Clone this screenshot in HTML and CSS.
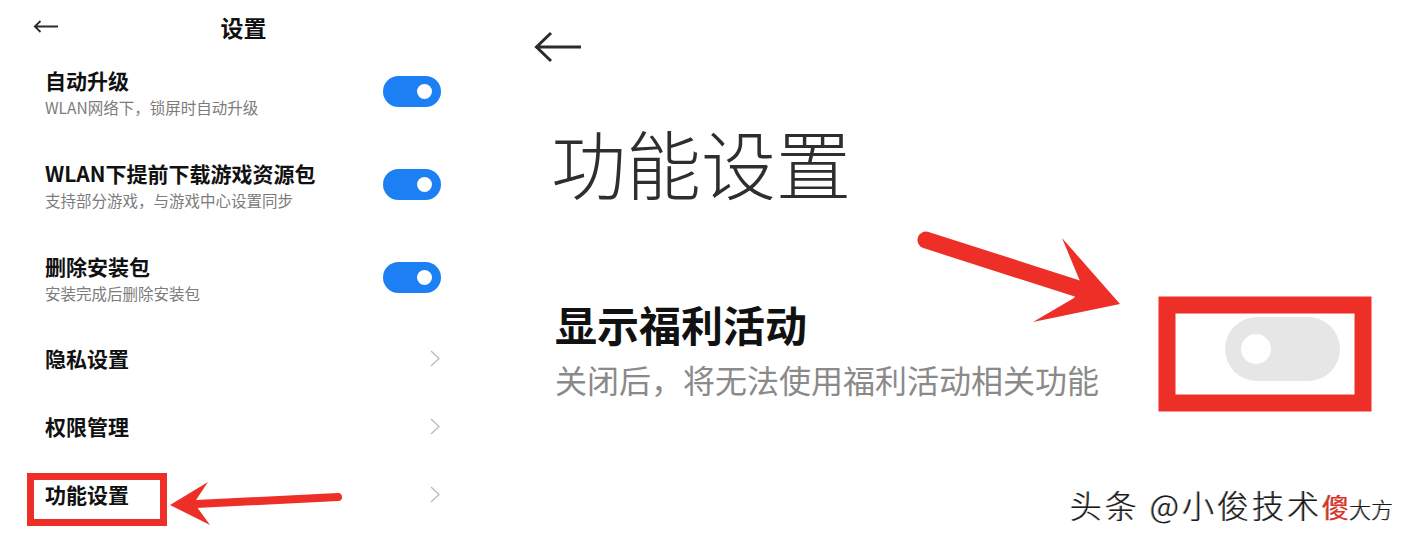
FILE: index.html
```html
<!DOCTYPE html>
<html lang="zh-CN">
<head>
<meta charset="utf-8">
<title>设置</title>
<link rel="stylesheet" href="styles.css">
</head>
<body>
<div class="page">
  <section class="left">
    <header class="l-head">
      <svg class="back-sm" viewBox="0 0 26 13" aria-hidden="true"><path d="M25 6.5H2M7.5 1L1.8 6.5L7.5 12"/></svg>
      <h1 class="l-title">设置</h1>
      <span class="spacer"></span>
    </header>
    <ul class="l-list">
      <li class="row two">
        <div class="txt"><div class="t">自动升级</div><div class="s">WLAN网络下，锁屏时自动升级</div></div>
        <span class="sw on"></span>
      </li>
      <li class="row two">
        <div class="txt"><div class="t">WLAN下提前下载游戏资源包</div><div class="s">支持部分游戏，与游戏中心设置同步</div></div>
        <span class="sw on"></span>
      </li>
      <li class="row two">
        <div class="txt"><div class="t">删除安装包</div><div class="s">安装完成后删除安装包</div></div>
        <span class="sw on"></span>
      </li>
      <li class="row one">
        <div class="t">隐私设置</div>
        <svg class="chev" viewBox="0 0 10 17" aria-hidden="true"><path d="M1 1L9 8.5L1 16"/></svg>
      </li>
      <li class="row one">
        <div class="t">权限管理</div>
        <svg class="chev" viewBox="0 0 10 17" aria-hidden="true"><path d="M1 1L9 8.5L1 16"/></svg>
      </li>
      <li class="row one">
        <div class="t">功能设置</div>
        <svg class="chev" viewBox="0 0 10 17" aria-hidden="true"><path d="M1 1L9 8.5L1 16"/></svg>
      </li>
    </ul>
  </section>

  <section class="right">
    <svg class="back-lg" viewBox="0 0 50 34" aria-hidden="true"><path d="M48 17H4M18 3L3.5 17L18 31"/></svg>
    <h2 class="r-title">功能设置</h2>
    <div class="r-row">
      <div class="r-txt">
        <div class="r-t">显示福利活动</div>
        <div class="r-s">关闭后，将无法使用福利活动相关功能</div>
      </div>
      <span class="sw-lg"></span>
    </div>
  </section>

  <svg class="annot" viewBox="0 0 1418 544" aria-hidden="true">
    <rect x="30.5" y="476.5" width="133" height="46" fill="none" stroke="#ee2f28" stroke-width="7"/>
    <line x1="196" y1="504" x2="338" y2="497" stroke="#ee2f28" stroke-width="8" stroke-linecap="round"/>
    <polygon points="170,505 208,482 194,503 210,525" fill="#ee2f28"/>
    <rect x="1167" y="305" width="196" height="98" fill="none" stroke="#ee2f28" stroke-width="17"/>
    <line x1="926" y1="240" x2="1082" y2="290" stroke="#ee2f28" stroke-width="17" stroke-linecap="round"/>
    <polygon points="1120,304 1062,238 1082,286 1074,298 1033,322" fill="#ee2f28"/>
  </svg>

  <div class="wm">头条 @小俊技术<span class="wm-red">傻</span><span class="wm-end">大方</span></div>
</div>
</body>
</html>
```

FILE: styles.css
```css
* { box-sizing: border-box; }
html, body { margin: 0; padding: 0; background: #fff; }
body {
  width: 1418px;
  height: 544px;
  overflow: hidden;
  font-family: "Noto Sans CJK SC", "Noto Sans", sans-serif;
  color: #111;
}
.page {
  position: relative;
  display: flex;
  width: 1418px;
  height: 544px;
}

/* left panel */
.left {
  width: 487px;
  flex: none;
}
.l-head {
  display: flex;
  align-items: center;
  height: 45px;
  padding: 8px 33px 0 33px;
}
.back-sm {
  width: 26px;
  height: 13px;
  flex: none;
  fill: none;
  stroke: #2a2a2a;
  stroke-width: 1.8;
}
.spacer { width: 26px; flex: none; }
.l-title {
  flex: 1;
  margin: 0;
  text-align: center;
  font-size: 23px;
  font-weight: 700;
  line-height: 30px;
  color: #111;
}
.l-list {
  list-style: none;
  margin: 0;
  padding: 0 46px 0 45px;
}
.row {
  display: flex;
  align-items: center;
  justify-content: space-between;
}
.row.two { height: 93px; }
.row.one { height: 68px; }
.t {
  font-size: 21px;
  font-weight: 700;
  line-height: 30px;
  color: #111;
}
.s {
  font-size: 15.5px;
  line-height: 24px;
  color: #7c7c7c;
}
.sw {
  position: relative;
  width: 58px;
  height: 31px;
  border-radius: 16px;
  background: #1c7ff4;
  flex: none;
}
.sw::after {
  content: "";
  position: absolute;
  left: 34px;
  top: 8px;
  width: 15px;
  height: 15px;
  border-radius: 50%;
  background: #fff;
}
.chev {
  width: 10px;
  height: 17px;
  margin-right: 1px;
  fill: none;
  stroke: #bdbdbd;
  stroke-width: 1.4;
}

/* right panel */
.right {
  flex: 1;
  padding: 30px 78px 0 46px;
}
.back-lg {
  display: block;
  width: 50px;
  height: 34px;
  fill: none;
  stroke: #2b2b2b;
  stroke-width: 3;
}
.r-title {
  margin: 48px 0 0 18px;
  font-size: 75px;
  font-weight: 300;
  line-height: 100px;
  color: #2e2e2e;
  letter-spacing: 0;
}
.r-row {
  display: flex;
  align-items: center;
  justify-content: space-between;
  margin: 82px 0 0 22px;
}
.r-t {
  font-size: 42px;
  font-weight: 700;
  line-height: 60px;
  color: #111;
}
.r-s {
  font-size: 32px;
  line-height: 50px;
  color: #8a8a8a;
}
.sw-lg {
  position: relative;
  width: 115px;
  height: 64px;
  border-radius: 32px;
  background: #e6e6e6;
  flex: none;
}
.sw-lg::after {
  content: "";
  position: absolute;
  left: 16px;
  top: 17px;
  width: 30px;
  height: 30px;
  border-radius: 50%;
  background: #fff;
}

/* annotations */
.annot {
  position: absolute;
  left: 0;
  top: 0;
  width: 1418px;
  height: 544px;
  pointer-events: none;
}

/* watermark */
.wm {
  position: absolute;
  left: 1070px;
  top: 483px;
  font-size: 32px;
  font-weight: 300;
  line-height: 42px;
  color: #1a1a1a;
  white-space: nowrap;
  letter-spacing: 3px;
  text-shadow: 1px 1px 0 #fff, -1px 0 0 #9a9a9a;
}
.wm-red {
  color: #e0321f;
  font-size: 27px;
  font-weight: 400;
  letter-spacing: 0;
}
.wm-end {
  font-size: 22px;
  letter-spacing: 0;
}
```
